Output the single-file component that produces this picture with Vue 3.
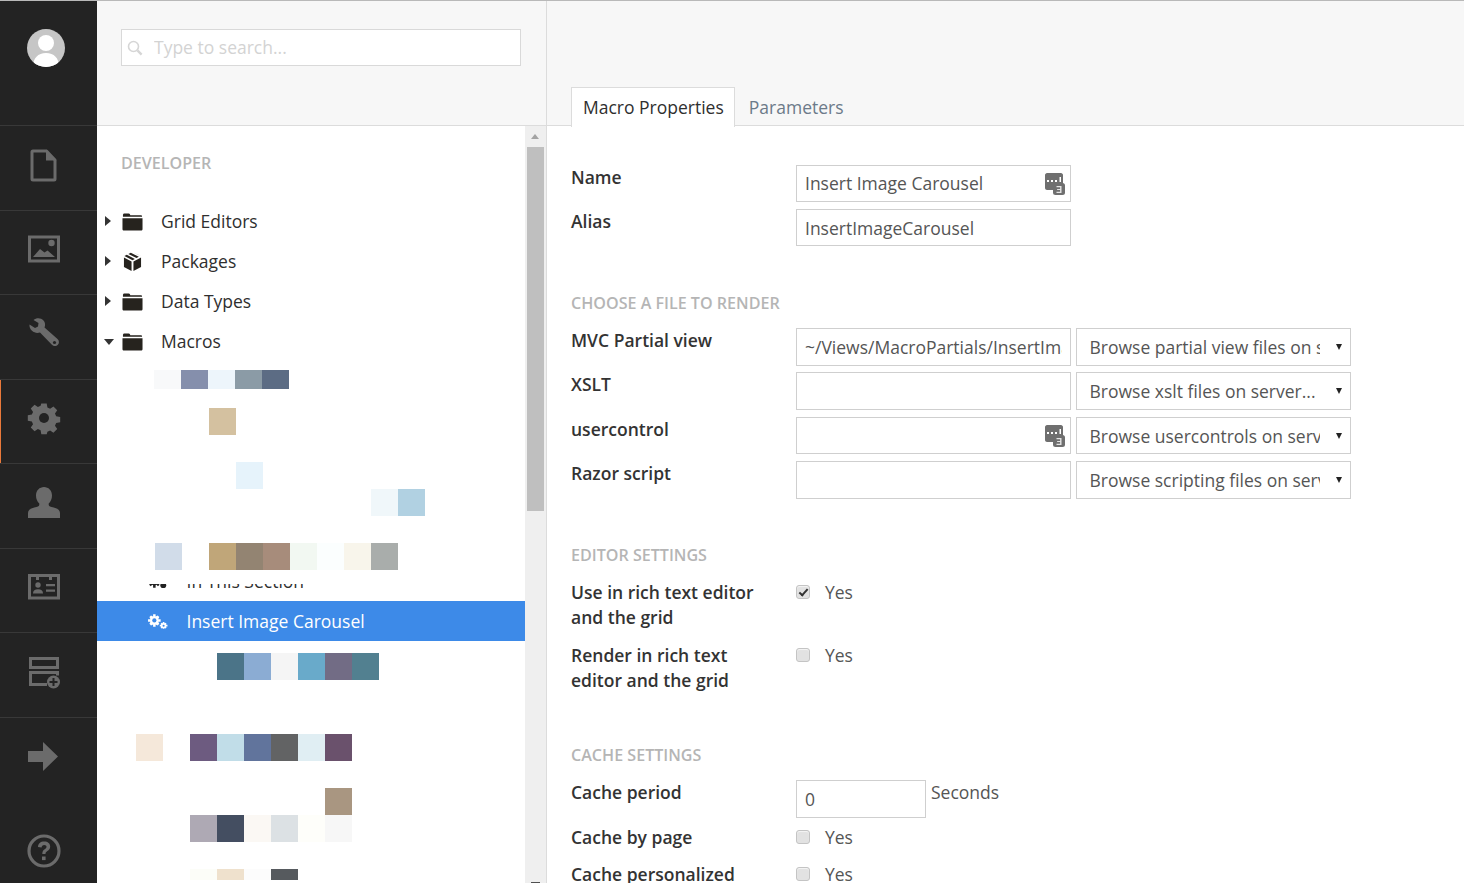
<template>
  <div class="app">
    <aside class="sidebar">
      <div class="avatar-cell">
        <svg class="avatar" viewBox="0 0 38 38">
          <defs>
            <clipPath id="av"><circle cx="19" cy="19" r="19" /></clipPath>
          </defs>
          <g clip-path="url(#av)">
            <rect width="38" height="38" fill="#c6c6c6" />
            <circle cx="19" cy="14" r="8" fill="#fff" />
            <path d="M6 38c0-9 5-14 13-14s13 5 13 14z" fill="#fff" />
          </g>
        </svg>
      </div>
      <a v-for="item in navItems" :key="item.name" class="nav-item" :class="{ active: item.active, plain: item.plain }">
        <svg class="nav-icon" :style="{ marginTop: item.shift + 'px', marginLeft: item.left + 'px' }" viewBox="0 0 34 34" v-html="item.svg"></svg>
      </a>
    </aside>

    <section class="tree-pane">
      <header class="tree-head">
        <div class="search">
          <svg class="search-icon" viewBox="0 0 16 16">
            <circle cx="6.5" cy="6.5" r="5" fill="none" stroke="#d6d6d6" stroke-width="1.6" />
            <path d="M10.4 10.4l4.2 4.2" stroke="#d6d6d6" stroke-width="2.4" />
          </svg>
          <input type="text" placeholder="Type to search..." />
        </div>
      </header>
      <div class="tree-body">
        <div class="tree-scroll">
          <h5 class="tree-title">DEVELOPER</h5>
          <div v-for="row in treeRows" :key="row.label" class="tree-row">
            <span class="caret" :class="{ down: row.open }"></span>
            <svg v-if="row.icon === 'folder'" class="tree-icon" viewBox="0 0 22 19">
              <path d="M1 4V2.5C1 1.7 1.6 1 2.5 1h4.6c.6 0 1 .4 1.2 1l.4 1H20c.6 0 1 .4 1 1v.5H1zM0.5 6h21v11.5c0 .8-.7 1.5-1.5 1.5H2c-.8 0-1.5-.7-1.5-1.5z" fill="#26231e" />
            </svg>
            <svg v-else class="tree-icon box" viewBox="0 0 20 22">
              <path d="M1.500 5.200L4 4l8.500 4.300L10 9.600zM5.700 3.100L8.200 1.800l8.500 4.300-2.500 1.300zM9.900 1l8.600 4.200-.1.100L9.900 1zM1 6.800l8 4.100V21l-8-4.200zM19 6.800l-8 4.100V21l8-4.200z" fill="#26231e" />
            </svg>
            <span>{{ row.label }}</span>
          </div>

          <div class="mosaic upper">
            <div v-for="(row, i) in upperMosaic" :key="i" class="mosaic-row" :style="{ paddingTop: row.top + 'px', paddingLeft: row.left + 'px' }">
              <span v-for="(c, j) in row.cells" :key="j" class="cell" :style="{ background: c, height: row.h + 'px' }"></span>
            </div>
          </div>

          <div class="tree-row leaf">
            <svg class="gears" viewBox="0 0 20 14">
              <g fill="#222">
                <circle cx="7" cy="6.5" r="4.2" /><path d="M5.8 0h2.4v13H5.8zM.5 5.3h13v2.4H.5zM2 2.6l1.6-1.6 8.4 9-1.6 1.6zM10.4 1l1.6 1.6-8.4 9L2 10z" />
                <circle cx="15.5" cy="10.5" r="2.8" />
              </g>
            </svg>
            <span>In This Section</span>
          </div>
          <div class="tree-row leaf selected">
            <svg class="gears" viewBox="0 0 20 14">
              <g fill="#fff">
                <path d="M5.800 0h2.400v2.200l2-.9 1.500 1.500-1 2h2.300v2.400h-2.300l1 2-1.500 1.500-2-.9v2.200H5.800v-2.200l-2 .9-1.500-1.500 1-2H1V4.800h2.300l-1-2 1.500-1.500 2 .9z" />
                <path d="M15 7.500h1.600v1.200l1.100-.5.900.9-.5 1.100h1.400v1.500h-1.400l.5 1.100-.9.900-1.100-.5V14H15v-.8l-1.100.5-.9-.9.500-1.100h-1.300v-1.500h1.300l-.5-1.100.9-.9 1.100.5z" />
              </g>
              <circle cx="7" cy="6" r="2" fill="#3d8ae8" />
              <circle cx="15.800" cy="11" r="1" fill="#3d8ae8" />
            </svg>
            <span>Insert Image Carousel</span>
          </div>

          <div class="mosaic">
            <div v-for="(row, i) in lowerMosaic" :key="i" class="mosaic-row" :style="{ paddingTop: row.top + 'px', paddingLeft: row.left + 'px' }">
              <span v-for="(c, j) in row.cells" :key="j" class="cell" :style="{ background: c, height: row.h + 'px' }"></span>
            </div>
          </div>
        </div>
        <div class="scrollbar">
          <span class="arrow-up"></span>
          <span class="thumb"></span>
          <span class="arrow-down"></span>
        </div>
      </div>
    </section>

    <main class="editor">
      <header class="editor-head">
        <nav class="tabs">
          <a class="tab active">Macro Properties</a>
          <a class="tab">Parameters</a>
        </nav>
      </header>
      <div class="form">
        <div class="field">
          <label>Name</label>
          <div class="control input-wrap">
            <input class="text" type="text" value="Insert Image Carousel" />
            <svg class="badge" viewBox="0 0 20 22">
              <path d="M2 0h14c1 0 2 1 2 2v10H9v5H2c-1 0-2-1-2-2V2C0 1 1 0 2 0z" fill="#6f6f6f" />
              <rect x="8" y="10" width="12" height="12" rx="2.500" fill="#6f6f6f" />
              <g fill="#fff"><rect x="2" y="7" width="2" height="2" /><rect x="6" y="7" width="2" height="2" /><rect x="10" y="7" width="2" height="2" /><rect x="14.500" y="4" width="1.500" height="5" /></g>
              <path d="M11.500 13h5v7h-5v-1.300h3.600v-1.600h-3v-1.200h3v-1.600h-3.600z" fill="#e4e4e4" />
            </svg>
          </div>
        </div>
        <div class="field">
          <label>Alias</label>
          <div class="control"><input class="text" type="text" value="InsertImageCarousel" /></div>
        </div>

        <h5 class="section first">CHOOSE A FILE TO RENDER</h5>
        <div class="field" v-for="row in fileRows" :key="row.label">
          <label>{{ row.label }}</label>
          <div class="control input-wrap">
            <input class="text" type="text" :value="row.value" />
            <svg v-if="row.badge" class="badge" viewBox="0 0 20 22">
              <path d="M2 0h14c1 0 2 1 2 2v10H9v5H2c-1 0-2-1-2-2V2C0 1 1 0 2 0z" fill="#6f6f6f" />
              <rect x="8" y="10" width="12" height="12" rx="2.500" fill="#6f6f6f" />
              <g fill="#fff"><rect x="2" y="7" width="2" height="2" /><rect x="6" y="7" width="2" height="2" /><rect x="10" y="7" width="2" height="2" /><rect x="14.500" y="4" width="1.500" height="5" /></g>
              <path d="M11.500 13h5v7h-5v-1.300h3.600v-1.600h-3v-1.200h3v-1.600h-3.600z" fill="#e4e4e4" />
            </svg>
          </div>
          <div class="select-wrap">
            <select class="select"><option>{{ row.browse }}</option></select>
          </div>
        </div>

        <h5 class="section editor-settings">EDITOR SETTINGS</h5>
        <div class="check-field">
          <label>Use in rich text editor and the grid</label>
          <label class="check"><input type="checkbox" checked /><span>Yes</span></label>
        </div>
        <div class="check-field">
          <label>Render in rich text editor and the grid</label>
          <label class="check"><input type="checkbox" /><span>Yes</span></label>
        </div>

        <h5 class="section cache">CACHE SETTINGS</h5>
        <div class="field period">
          <label>Cache period</label>
          <input class="text short" type="text" value="0" />
          <span class="unit">Seconds</span>
        </div>
        <div class="check-field single">
          <label>Cache by page</label>
          <label class="check"><input type="checkbox" /><span>Yes</span></label>
        </div>
        <div class="check-field single">
          <label>Cache personalized</label>
          <label class="check"><input type="checkbox" /><span>Yes</span></label>
        </div>
      </div>
    </main>
  </div>
</template>

<script setup>
const G = "#6b6b6b";

const navItems = [
  {
    name: "content", shift: -6, left: 0,
    svg: `<path d="M6 3h13.500l8.500 9v19c0 .6-.4 1-1 1H6c-.6 0-1-.4-1-1V4c0-.6.4-1 1-1z" fill="none" stroke="${G}" stroke-width="3" stroke-linejoin="round"/><path d="M19 1.500l10.500 11H19z" fill="${G}"/>`,
  },
  {
    name: "media", shift: -6, left: 0,
    svg: `<rect x="2.500" y="5" width="29" height="24" fill="none" stroke="${G}" stroke-width="3"/><circle cx="24.500" cy="11" r="3.200" fill="${G}"/><path d="M6 25l7-8 4.500 3.500 3-2 7.500 6.500z" fill="${G}"/>`,
  },
  {
    name: "settings", shift: -6, left: 0,
    svg: `<path d="M2.500 7.500l5.500 3.500 3-1.500.5-3.500L6.500 3c3-2.500 7.500-2.200 10 .5 1.800 2 2 4.700 1 7l13 11.500c1.800 1.600 1.900 4.200.4 5.800-1.600 1.800-4.300 1.700-6 0L13 15.500c-2.800 1-5.800.3-8-1.700-1.900-1.800-2.800-4-2.500-6.300z" fill="${G}"/><circle cx="27.500" cy="25.500" r="1.600" fill="#232323"/>`,
  },
  {
    name: "developer", active: true, shift: -6, left: 0,
    svg: `<path d="M14 1h6l.8 4.300 3 1.300 3.700-2.500 4.200 4.200-2.500 3.700 1.300 3 4.500.8v6l-4.500.8-1.300 3 2.500 3.700-4.200 4.200-3.700-2.500-3 1.300L20 35h-6l-.8-4.400-3-1.300-3.700 2.500-4.200-4.200 2.500-3.700-1.300-3L-1 20v-6l4.500-.8 1.300-3L2.300 6.500l4.200-4.200 3.700 2.500 3-1.300z" transform="translate(1.700 1.700) scale(.9)" fill="${G}"/><circle cx="17" cy="17" r="5" fill="#232323"/>`,
  },
  {
    name: "users", shift: -6, left: 0,
    svg: `<path d="M17 1c4.500 0 8 3.500 8 8.500 0 3.300-1.300 6.300-3.300 8v1.300c0 1.400 1.800 2 5 2.800 3.500.9 6.300 2.300 6.300 5.400V32H1v-5c0-3.100 2.800-4.500 6.300-5.400 3.200-.8 5-1.400 5-2.800v-1.300c-2-1.700-3.300-4.700-3.300-8C9 4.500 12.500 1 17 1z" fill="${G}"/>`,
  },
  {
    name: "members", shift: -6, left: 0,
    svg: `<path d="M1 4h32v25.500H1z M4 7v19.500h26V7z" fill="${G}" fill-rule="evenodd"/><path d="M9 5h3v5H9zM22 5h3v5h-3z" fill="${G}"/><circle cx="11" cy="15" r="2.700" fill="${G}"/><path d="M6 23.500c0-3 2-4.300 5-4.300s5 1.300 5 4.300z" fill="${G}"/><path d="M19 14h9v2.200h-9zM19 19.500h9v2.200h-9z" fill="${G}"/>`,
  },
  {
    name: "forms", shift: -6, left: 0,
    svg: `<path d="M2 2h30v12H2zM5 5v6h24V5z" fill="${G}" fill-rule="evenodd"/><path d="M2 16h30v4.500h-3V19H5v9h15v3H2z" fill="${G}"/><circle cx="26.500" cy="27" r="6.500" fill="${G}"/><path d="M25.500 23h2v3h3v2h-3v3h-2v-3h-3v-2h3z" fill="#232323"/>`,
  },
  {
    name: "deploy", shift: -8, left: -2,
    svg: `<path d="M2 12h15V3l15 14.500L17 32v-9H2z" fill="${G}"/>`,
  },
  {
    name: "help", plain: true, shift: 14, left: 0,
    svg: `<circle cx="17" cy="17" r="15" fill="none" stroke="${G}" stroke-width="3.200"/><path d="M11 13c0-3.500 2.500-5.500 6.200-5.500 3.600 0 6 2 6 5 0 2.300-1.200 3.400-2.800 4.500-1.300.9-1.900 1.500-1.900 3H15.300c0-2.500.8-3.700 2.400-4.800 1.200-.8 1.800-1.500 1.800-2.500s-.9-1.800-2.300-1.800c-1.500 0-2.500.9-2.600 2.600z" fill="${G}"/><rect x="15" y="22.500" width="3.600" height="3.600" fill="${G}"/>`,
  },
];

const treeRows = [
  { label: "Grid Editors", icon: "folder" },
  { label: "Packages", icon: "box" },
  { label: "Data Types", icon: "folder" },
  { label: "Macros", icon: "folder", open: true },
];

const fileRows = [
  { label: "MVC Partial view", value: "~/Views/MacroPartials/InsertImageCarousel.cshtml", browse: "Browse partial view files on server..." },
  { label: "XSLT", value: "", browse: "Browse xslt files on server..." },
  { label: "usercontrol", value: "", badge: true, browse: "Browse usercontrols on server..." },
  { label: "Razor script", value: "", browse: "Browse scripting files on server..." },
];

// the blurred-out tree rows, one strip of 27px cells per row
const T = "transparent";
const upperMosaic = [
  { top: 9, left: 57, h: 19, cells: ["#f8f9fa", "#858fac", "#edf5fb", "#8b9ba6", "#5c6c84"] },
  { top: 19, left: 112, h: 27, cells: ["#d4c1a0"] },
  { top: 27, left: 139, h: 27, cells: ["#e6f3fb"] },
  { top: 0, left: 274, h: 27, cells: ["#f0f7fa", "#b1d1e2"] },
  { top: 27, left: 58, h: 27, cells: ["#d1dce9", T, "#c0a679", "#938472", "#a78c7b", "#f2f8f2", "#fbfefe", "#f8f5eb", "#a9adab"] },
];
const lowerMosaic = [
  { top: 12, left: 120, h: 27, cells: ["#4b7488", "#8bacd3", "#f5f5f5", "#69aaca", "#726c85", "#528090"] },
  { top: 54, left: 39, h: 27, cells: ["#f5e8da", T, "#6d5b80", "#c1dde8", "#61749c", "#626364", "#e0eef3", "#6a516c"] },
  { top: 27, left: 228, h: 27, cells: ["#a99681"] },
  { top: 0, left: 93, h: 27, cells: ["#aea9b4", "#444e61", "#fbf8f4", "#dce1e4", "#fefefa", "#f7f7f7"] },
  { top: 27, left: 93, h: 11, cells: ["#fcfdf8", "#efe1cd", "#fcfcfc", "#565a5e"] },
];
</script>

<style>
html,
body {
  margin: 0;
  height: 100%;
  overflow: hidden;
  background: #fff;
}
</style>

<style scoped>
.app {
  display: flex;
  height: 883px;
  box-sizing: border-box;
  border-top: 1px solid #b9b9b9;
  font-family: "Open Sans", "Liberation Sans", sans-serif;
  font-size: 17.5px;
  color: #2f2f2f;
  overflow: hidden;
}

/* left nav */
.sidebar {
  width: 97px;
  flex: none;
  background: #232323;
  display: flex;
  flex-direction: column;
}
.avatar-cell {
  height: 125px;
  flex: none;
  box-sizing: border-box;
  border-bottom: 1px solid #383838;
  padding: 28px 0 0 27px;
}
.avatar {
  width: 38px;
  height: 38px;
  display: block;
}
.nav-item {
  height: 84.5px;
  flex: none;
  box-sizing: border-box;
  border-bottom: 1px solid #383838;
  display: flex;
  align-items: center;
  justify-content: center;
  padding-right: 10px;
}
.nav-item.active {
  box-shadow: inset 1px 0 0 #e9793a;
}
.nav-item.plain {
  border-bottom: none;
}
.nav-item:nth-last-child(2) {
  border-bottom: none;
}
.nav-icon {
  width: 34px;
  height: 34px;
}

/* tree */
.tree-pane {
  width: 450px;
  flex: none;
  box-sizing: border-box;
  border-right: 1px solid #dcdcdc;
  display: flex;
  flex-direction: column;
}
.tree-head {
  height: 125px;
  flex: none;
  box-sizing: border-box;
  background: #f7f7f7;
  border-bottom: 1px solid #dcdcdc;
  padding: 28px 25px 0 24px;
}
.search {
  position: relative;
  height: 37px;
}
.search input {
  width: 100%;
  height: 37px;
  box-sizing: border-box;
  border: 1px solid #d9d9d9;
  background: #fff;
  padding: 0 8px 2px 32px;
  font: inherit;
  outline: none;
}
.search input::placeholder {
  color: #d3d3d3;
  opacity: 1;
}
.search-icon {
  position: absolute;
  left: 6px;
  top: 11px;
  width: 16px;
  height: 16px;
}
.tree-body {
  flex: 1;
  display: flex;
  min-height: 0;
}
.tree-scroll {
  flex: 1;
  min-width: 0;
  overflow: hidden;
}
.tree-title {
  margin: 0;
  padding: 25px 0 0 24px;
  height: 75px;
  box-sizing: border-box;
  font-size: 16.1px;
  font-weight: 600;
  line-height: 24px;
  color: #b5b5b5;
}
.tree-row {
  height: 40px;
  display: flex;
  align-items: center;
  padding-left: 64px;
  position: relative;
}
.caret {
  position: absolute;
  left: 8px;
  top: 15px;
  border-left: 6.5px solid #333;
  border-top: 5px solid transparent;
  border-bottom: 5px solid transparent;
}
.caret.down {
  left: 7px;
  top: 18px;
  border-top: 6px solid #333;
  border-left: 5px solid transparent;
  border-right: 5px solid transparent;
  border-bottom: none;
}
.tree-icon {
  position: absolute;
  left: 25px;
  top: 11px;
  width: 21px;
  height: 19px;
}
.tree-icon.box {
  left: 26px;
  top: 10px;
  width: 19px;
  height: 21px;
}
.tree-row.leaf {
  padding-left: 89.5px;
}
.gears {
  position: absolute;
  left: 50px;
  top: 13px;
  width: 21px;
  height: 15px;
}
.tree-row.selected {
  background: #3d8ae8;
  color: #fff;
}
.mosaic {
  background: #fff;
}
.mosaic.upper {
  height: 223px;
  margin-bottom: -23px;
  position: relative;
  z-index: 1;
  overflow: hidden;
}
.mosaic-row {
  display: flex;
}
.cell {
  width: 27px;
  flex: none;
}
.scrollbar {
  width: 20px;
  flex: none;
  background: #efefef;
  display: flex;
  flex-direction: column;
  align-items: center;
  padding-right: 1px;
  box-sizing: content-box;
  position: relative;
}
.arrow-up {
  margin-top: 8px;
  border-bottom: 5px solid #a3a3a3;
  border-left: 4px solid transparent;
  border-right: 4px solid transparent;
}
.thumb {
  width: 17px;
  height: 364px;
  background: #bfbfbf;
  margin-top: 8px;
}
.arrow-down {
  margin-top: auto;
  width: 9px;
  height: 1px;
  background: #505050;
}

/* editor */
.editor {
  flex: 1;
  min-width: 0;
}
.editor-head {
  height: 125px;
  box-sizing: border-box;
  background: #f7f7f7;
  border-bottom: 1px solid #dcdcdc;
  padding: 86px 0 0 24px;
}
.tabs {
  display: flex;
}
.tab {
  height: 39px;
  box-sizing: border-box;
  padding: 0 10px 0 11px;
  line-height: 39px;
  border: 1px solid transparent;
  border-bottom: none;
  color: #6c7a89;
  margin-right: 2px;
}
.tab.active {
  background: #fff;
  border-color: #dcdcdc;
  color: #2f2f2f;
  height: 40px;
}
.form {
  padding: 38.6px 0 0 24px;
}
.field {
  display: flex;
  margin-bottom: 6.9px;
}
.field label,
.check-field > label:first-child {
  width: 225px;
  flex: none;
  font-weight: 600;
  line-height: 25px;
  color: #333;
}
.control {
  width: 275px;
  flex: none;
}
.input-wrap {
  position: relative;
}
.text {
  width: 100%;
  height: 37.5px;
  box-sizing: border-box;
  border: 1px solid #cfcfcf;
  background: #fff;
  padding: 0 8px;
  font: inherit;
  color: #555;
  outline: none;
  display: block;
}
.badge {
  position: absolute;
  right: 6px;
  top: 8px;
  width: 20px;
  height: 22px;
}
.select-wrap {
  width: 275px;
  height: 37.5px;
  margin-left: 5px;
  flex: none;
  position: relative;
}
.select-wrap::after {
  content: "";
  position: absolute;
  right: 9px;
  top: 16px;
  border-top: 6px solid #222;
  border-left: 3.5px solid transparent;
  border-right: 3.5px solid transparent;
  pointer-events: none;
}
.select {
  appearance: none;
  width: 100%;
  height: 100%;
  box-sizing: border-box;
  border: 1px solid #cfcfcf;
  border-radius: 0;
  background: #fff;
  padding: 0 30px 0 12.5px;
  font: inherit;
  color: #555;
  outline: none;
}
.section {
  margin: 0;
  font-size: 16.1px;
  font-weight: 600;
  line-height: 24px;
  color: #b5b5b5;
}
.section.first {
  padding: 37.7px 0 13px;
}
.section.editor-settings {
  padding: 37.2px 0 13px;
}
.section.cache {
  padding: 37px 0 13px;
}
.check-field {
  display: flex;
  margin-bottom: 13px;
}
.check-field > label:first-child {
  padding-right: 30px;
  box-sizing: border-box;
}
.check {
  display: flex;
  align-items: flex-start;
  gap: 15px;
  line-height: 25px;
  color: #555;
}
.check input {
  appearance: none;
  width: 14px;
  height: 14px;
  margin: 5.5px 0 0;
  border: 1px solid #c4c4c4;
  border-radius: 3px;
  background: #e2e2e2;
  box-shadow: inset 0 1px 1px #f5f5f5;
  position: relative;
}
.check input:checked::after {
  content: "";
  position: absolute;
  left: 4px;
  top: 1px;
  width: 3px;
  height: 7px;
  border: solid #333;
  border-width: 0 2px 2px 0;
  transform: rotate(42deg);
}
.period {
  align-items: flex-start;
  margin-bottom: 7px;
}
.short {
  width: 130px;
  height: 38px;
  flex: none;
}
.unit {
  margin-left: 5px;
  line-height: 25px;
  color: #555;
}
.check-field.single {
  margin-bottom: 12px;
}
</style>
